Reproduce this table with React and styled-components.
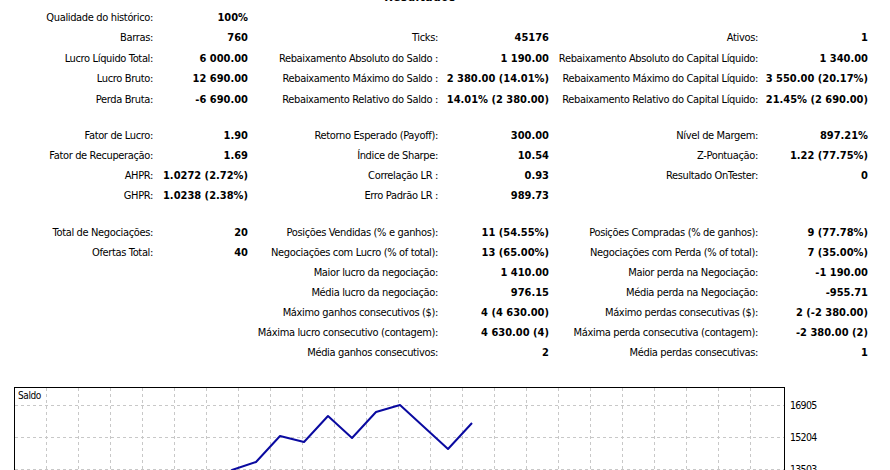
import React from "react";
import styled, { createGlobalStyle } from "styled-components";

const GlobalStyle = createGlobalStyle`
  html, body {
    margin: 0;
    padding: 0;
    background: #ffffff;
    overflow: hidden;
  }
  body {
    font-family: "DejaVu Sans Condensed", "DejaVu Sans", "Liberation Sans", sans-serif;
    font-size: 11px;
    color: #000;
  }
`;

const Page = styled.div`
  width: 890px;
  height: 470px;
  display: flex;
  flex-direction: column;
`;

const Title = styled.div`
  width: 840px;
  height: 12px;
  margin-top: -9px;
  line-height: 12px;
  text-align: center;
  font-weight: bold;
  font-size: 12px;
  letter-spacing: 0.4px;
`;

const Block = styled.div`
  display: grid;
  grid-template-columns: 153px 95px 190px 111px 209px 110px;
  grid-auto-rows: ${(p) => p.$row}px;
  margin-top: ${(p) => p.$gap}px;
`;

const Label = styled.div`
  display: flex;
  align-items: center;
  justify-content: flex-end;
  white-space: nowrap;
  letter-spacing: -0.35px;
`;

const Value = styled.div`
  display: flex;
  align-items: center;
  justify-content: flex-end;
  white-space: nowrap;
  font-weight: bold;
`;

const ChartRow = styled.div`
  display: flex;
  margin-top: 24px;
  padding-left: 14px;
`;

const Plot = styled.div`
  position: relative;
  width: 769px;
  height: 100px;
  border: 1px solid #000;
  border-bottom: none;
  background: #fff;
`;

const PlotCaption = styled.span`
  position: absolute;
  left: 3px;
  top: 2px;
  font-size: 10px;
  letter-spacing: -0.4px;
`;

const Axis = styled.div`
  display: flex;
  flex-direction: column;
  padding-left: 5px;
  padding-top: 11px;
`;

const Tick = styled.div`
  height: 32px;
  line-height: 14px;
  font-size: 10.5px;
  letter-spacing: -0.7px;
`;

const block1 = [
  [["Qualidade do histórico:", "100%"], null, null],
  [["Barras:", "760"], ["Ticks:", "45176"], ["Ativos:", "1"]],
  [
    ["Lucro Líquido Total:", "6 000.00"],
    ["Rebaixamento Absoluto do Saldo :", "1 190.00"],
    ["Rebaixamento Absoluto do Capital Líquido:", "1 340.00"],
  ],
  [
    ["Lucro Bruto:", "12 690.00"],
    ["Rebaixamento Máximo do Saldo :", "2 380.00 (14.01%)"],
    ["Rebaixamento Máximo do Capital Líquido:", "3 550.00 (20.17%)"],
  ],
  [
    ["Perda Bruta:", "-6 690.00"],
    ["Rebaixamento Relativo do Saldo :", "14.01% (2 380.00)"],
    ["Rebaixamento Relativo do Capital Líquido:", "21.45% (2 690.00)"],
  ],
];

const block2 = [
  [["Fator de Lucro:", "1.90"], ["Retorno Esperado (Payoff):", "300.00"], ["Nível de Margem:", "897.21%"]],
  [["Fator de Recuperação:", "1.69"], ["Índice de Sharpe:", "10.54"], ["Z-Pontuação:", "1.22 (77.75%)"]],
  [["AHPR:", "1.0272 (2.72%)"], ["Correlação LR :", "0.93"], ["Resultado OnTester:", "0"]],
  [["GHPR:", "1.0238 (2.38%)"], ["Erro Padrão LR :", "989.73"], null],
];

const block3 = [
  [
    ["Total de Negociações:", "20"],
    ["Posições Vendidas (% e ganhos):", "11 (54.55%)"],
    ["Posições Compradas (% de ganhos):", "9 (77.78%)"],
  ],
  [
    ["Ofertas Total:", "40"],
    ["Negociações com Lucro (% of total):", "13 (65.00%)"],
    ["Negociações com Perda (% of total):", "7 (35.00%)"],
  ],
  [null, ["Maior lucro da negociação:", "1 410.00"], ["Maior perda na Negociação:", "-1 190.00"]],
  [null, ["Média lucro da negociação:", "976.15"], ["Média perda na Negociação:", "-955.71"]],
  [null, ["Máximo ganhos consecutivos ($):", "4 (4 630.00)"], ["Máximo perdas consecutivas ($):", "2 (-2 380.00)"]],
  [null, ["Máxima lucro consecutivo (contagem):", "4 630.00 (4)"], ["Máxima perda consecutiva (contagem):", "-2 380.00 (2)"]],
  [null, ["Média ganhos consecutivos:", "2"], ["Média perdas consecutivas:", "1"]],
];

const StatBlock = ({ rows, row, gap }) => (
  <Block $row={row} $gap={gap}>
    {rows.map((r, i) =>
      r.map((cell, j) => (
        <React.Fragment key={i + "-" + j}>
          <Label>{cell ? cell[0] : ""}</Label>
          <Value>{cell ? cell[1] : ""}</Value>
        </React.Fragment>
      ))
    )}
  </Block>
);

// balance points, in plot coordinates (origin = inside top-left of border)
const balance = [
  [185, 505], [209, 487], [232, 469], [256, 461], [280, 435], [304, 441],
  [328, 415], [352, 437], [376, 411], [400, 404], [424, 426], [448, 448], [472, 422],
].map(([x, y]) => [x - 15, y - 387]);

const BalanceChart = () => {
  const vLines = [];
  for (let x = 31; x < 740; x += 32) vLines.push(x);
  const hLines = [17, 49, 81];
  return (
    <ChartRow>
      <Plot>
        <svg width="769" height="100" style={{ display: "block" }}>
          {vLines.map((x) => (
            <line key={"v" + x} x1={x + 0.5} y1="0" x2={x + 0.5} y2="100"
              stroke="#c8c8c8" strokeDasharray="3 3" />
          ))}
          {hLines.map((y) => (
            <line key={"h" + y} x1="0" y1={y + 0.5} x2="769" y2={y + 0.5}
              stroke="#c8c8c8" strokeDasharray="3 3" />
          ))}
          <polyline
            points={balance.map((p) => p.join(",")).join(" ")}
            fill="none"
            stroke="#0a0aa0"
            strokeWidth="2"
            strokeLinejoin="round"
          />
        </svg>
        <PlotCaption>Saldo</PlotCaption>
      </Plot>
      <Axis>
        <Tick>16905</Tick>
        <Tick>15204</Tick>
        <Tick>13503</Tick>
      </Axis>
    </ChartRow>
  );
};

export default function App() {
  return (
    <Page>
      <GlobalStyle />
      <Title>Resultados</Title>
      <StatBlock rows={block1} row={20.5} gap={4} />
      <StatBlock rows={block2} row={20} gap={16} />
      <StatBlock rows={block3} row={20} gap={17} />
      <BalanceChart />
    </Page>
  );
}
